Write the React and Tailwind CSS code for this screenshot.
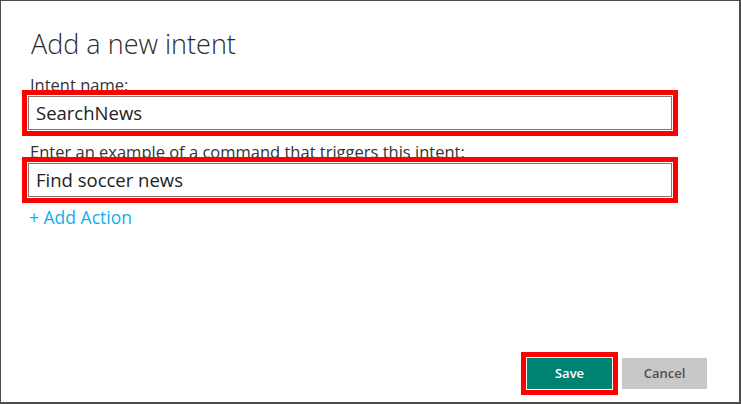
export default function App() {
  return (
    <div
      className="w-[741px] h-[404px] bg-white border-l border-t border-r-2 border-b-2 border-[#4d4d4d] flex flex-col text-[#333333]"
      style={{ fontFamily: '"Open Sans", "Noto Sans", sans-serif' }}
    >
      <div className="pl-[27px] pr-[67px] flex flex-col">
        <h1 className="mt-[25px] ml-[3px] text-[27px] leading-[36px] font-light text-[#2b2b2b]">
          Add a new intent
        </h1>
        <label className="mt-[11px] ml-[2px] text-[16.5px] leading-[23px] text-[#333]">
          Intent name:
        </label>
        <div className="h-[34px] border border-[#7a7a7a] outline-[5px] outline-solid outline-[#ff0000] outline-offset-[1px] flex items-center pl-[7px] text-[18.5px] text-[#222]">
          SearchNews
        </div>
        <label className="mt-[10px] ml-[2px] text-[16.5px] leading-[23px] text-[#333]">
          Enter an example of a command that triggers this intent:
        </label>
        <div className="h-[34px] border border-[#7a7a7a] outline-[5px] outline-solid outline-[#ff0000] outline-offset-[1px] flex items-center pl-[7px] text-[18.5px] text-[#222]">
          Find soccer news
        </div>
        <div className="mt-[8px] ml-[1px] text-[17.5px] leading-[24px] text-[#12aeea]">
          + Add Action
        </div>
      </div>
      <div className="mt-auto mb-[13px] pr-[32px] flex justify-end gap-[10px]">
        <button className="w-[85px] h-[31px] bg-[#008272] text-white text-[13px] font-semibold outline-[5px] outline-solid outline-[#ff0000] outline-offset-[1px]">
          Save
        </button>
        <button className="w-[85px] h-[31px] bg-[#c8c8c8] text-[#505050] text-[13px] font-semibold">
          Cancel
        </button>
      </div>
    </div>
  );
}
